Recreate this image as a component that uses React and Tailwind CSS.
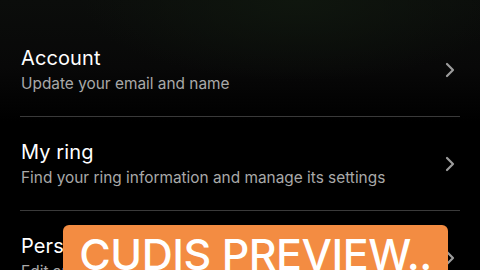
import { useState } from 'react';

const items = [
  { title: 'Account', desc: 'Update your email and name' },
  { title: 'My ring', desc: 'Find your ring information and manage its settings' },
  { title: 'Personal information', desc: 'Edit and manage your personal details' },
];

function Chevron() {
  return (
    <svg width="12" height="16" viewBox="0 0 12 16" fill="none" className="shrink-0">
      <path d="M3 2l6 6-6 6" stroke="#9c9c9c" strokeWidth="2.2" strokeLinecap="round" strokeLinejoin="round" />
    </svg>
  );
}

export default function App() {
  const [active] = useState(null);

  return (
    <div
      className="relative w-[480px] h-[270px] overflow-hidden bg-black text-white"
      style={{ fontFamily: 'Inter, "Noto Sans", sans-serif' }}
    >
      <div className="absolute inset-0 bg-[linear-gradient(180deg,#0b0d0b_0%,#080808_25%,#000_45%)]" />
      <div className="absolute inset-0 bg-[radial-gradient(ellipse_45%_30%_at_62%_0%,#0f160e_0%,transparent_100%)]" />

      <div className="relative flex flex-col pt-[23px]">
        {items.map((it) => (
          <div key={it.title} className="px-5">
            <div className="flex items-center justify-between h-[93px] pl-px pr-1">
              <div className="flex flex-col gap-[4px]">
                <span className="text-[20px] leading-6 tracking-[0.1px] text-white">{it.title}</span>
                <span className="text-[15.4px] leading-5 text-[#a9a9a9]">{it.desc}</span>
              </div>
              <Chevron />
            </div>
            <div className="h-px bg-[#3a3a3a]" />
          </div>
        ))}
      </div>

      <div className="absolute left-[63px] top-[225px] w-[385px] h-[60px] rounded-md bg-[#f38c42] flex items-start justify-center pt-[3px]">
        <span className="text-[43px] leading-[52px] font-medium tracking-[-0.5px] text-white">
          CUDIS PREVIEW..
        </span>
      </div>
    </div>
  );
}
